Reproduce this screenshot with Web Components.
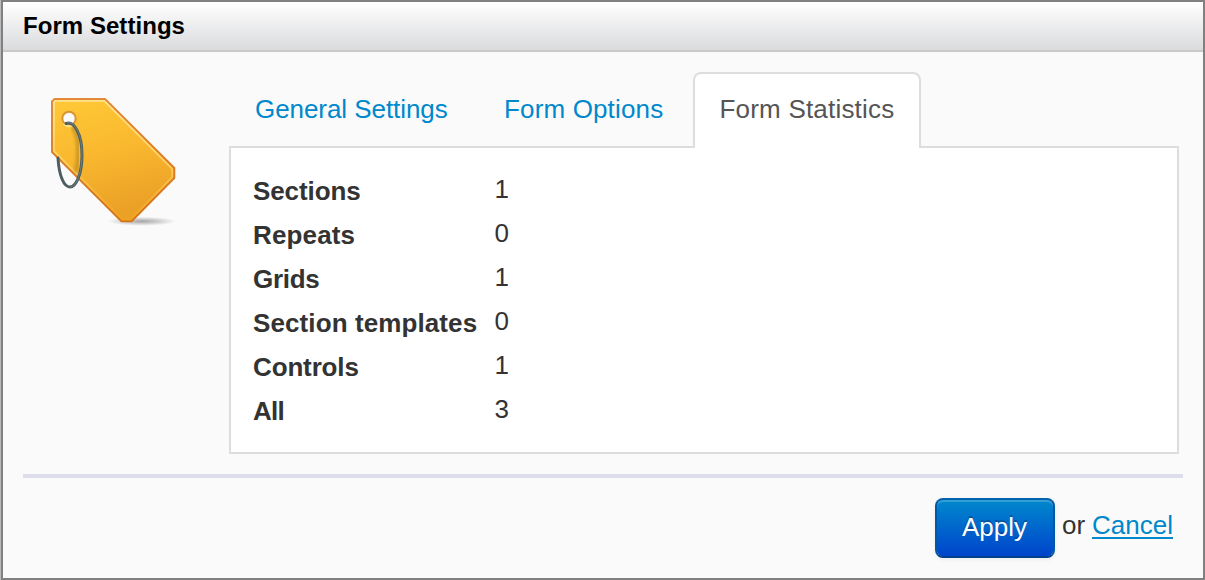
<!DOCTYPE html>
<html lang="en">
<head>
<meta charset="utf-8">
<title>Form Settings</title>
<style>
html,body{margin:0;height:100%;overflow:hidden}
body{font-family:"Liberation Sans",Arial,sans-serif;font-size:26px;line-height:40px;color:#333;background:#bbb}
</style>
</head>
<body>
<settings-dialog heading="Form Settings">
  <tag-icon slot="icon"></tag-icon>
  <tab-strip slot="content">
    <tab-item style="width:249px;letter-spacing:-.06px">General Settings</tab-item>
    <tab-item style="width:215px;letter-spacing:.15px">Form Options</tab-item>
    <tab-item active style="width:228px;letter-spacing:.2px">Form Statistics</tab-item>
  </tab-strip>
  <stats-panel slot="content">
    <stat-row label="Sections" style="--track:-.1px">1</stat-row>
    <stat-row label="Repeats" style="--track:.14px">0</stat-row>
    <stat-row label="Grids" style="--track:-.3px">1</stat-row>
    <stat-row label="Section templates" style="--track:.1px">0</stat-row>
    <stat-row label="Controls" style="--track:-.14px">1</stat-row>
    <stat-row label="All" style="--track:-.7px">3</stat-row>
  </stats-panel>
  <primary-button slot="actions">Apply</primary-button>
  <span slot="actions" style="margin-left:7px">or</span>
  <text-link slot="actions">Cancel</text-link>
</settings-dialog>
<script>
const define = (name, html, setup) => customElements.define(name, class extends HTMLElement {
  constructor() {
    super();
    this.attachShadow({mode: 'open'}).innerHTML = html;
  }
  connectedCallback() { if (setup) setup(this, this.shadowRoot); }
});

define('settings-dialog', `<style>
:host{display:flex;flex-direction:column;box-sizing:border-box;width:1204px;height:580px;margin-left:1px;border:2px solid #808080;background:#fafafa}
header{box-sizing:border-box;height:50px;padding-left:20px;border-bottom:2px solid #c9c9c9;background:linear-gradient(#fff,#dadbdd);font-weight:bold;font-size:24px;line-height:48px;letter-spacing:.05px;color:#000}
main{display:grid;grid-template-columns:206px 950px;height:402px;box-sizing:border-box;padding:20px 0 0 20px}
.icon{padding:13px 0 0 12px}
.content{display:flex;flex-direction:column}
hr{box-sizing:border-box;width:1160px;height:4px;margin:20px 0 0 20px;border:0;background:#ddddec;flex:none}
footer{display:flex;justify-content:flex-end;padding:20px 30px 0 0;line-height:54px}
</style>
<header></header>
<main><div class="icon"><slot name="icon"></slot></div><div class="content"><slot name="content"></slot></div></main>
<hr><footer><slot name="actions"></slot></footer>`,
(el, root) => root.querySelector('header').textContent = el.getAttribute('heading'));

define('tab-strip', `<style>
:host{display:flex;height:76px;margin-bottom:-2px;position:relative;z-index:1}
</style><slot></slot>`);

define('tab-item', `<style>
:host{display:block;box-sizing:border-box;height:76px;padding:15px 0 0 24px;border:2px solid transparent;border-bottom:0;border-radius:8px 8px 0 0;color:#08c;white-space:nowrap}
:host([active]){padding-left:24.5px;color:#555;background:#fff;border-color:#ddd}
</style><slot></slot>`);

define('stats-panel', `<style>
:host{display:block;box-sizing:border-box;width:950px;height:308px;padding:20px 0 0 22px;border:2px solid #ddd;background:#fff}
</style><slot></slot>`);

define('stat-row', `<style>
:host{display:grid;grid-template-columns:241.5px auto;height:44px;line-height:40px}
b{padding-top:3px;letter-spacing:var(--track,0)}
span{padding-top:1px}
</style><b></b><span><slot></slot></span>`,
(el, root) => root.querySelector('b').textContent = el.getAttribute('label'));

define('primary-button', `<style>
:host{display:block;box-sizing:border-box;width:120px;height:60px;padding-right:1px;border:2px solid;border-color:#0062ad #0058a6 #00408c;border-radius:8px;background:linear-gradient(#08c,#04c);background-clip:padding-box;background-color:#0050b0;box-shadow:inset 0 2px 0 rgba(255,255,255,.2),0 2px 4px rgba(0,0,0,.05);color:#fff;text-align:center;line-height:54px;text-shadow:0 -2px 0 rgba(0,0,0,.25)}
</style><slot></slot>`);

define('text-link', `<style>
:host{display:block;margin-left:7px;color:#08c;text-decoration:underline;text-decoration-thickness:2px;text-underline-offset:3px}
</style><slot></slot>`);

define('tag-icon', `<style>:host{display:block;width:150px;height:150px}svg{display:block}</style>
<svg width="150" height="150" viewBox="35 85 150 150">
<defs>
<linearGradient id="body" x1="0" y1="0" x2=".25" y2="1"><stop stop-color="#ffc936"/><stop offset=".5" stop-color="#f9b82f"/><stop offset="1" stop-color="#eba026"/></linearGradient>
<linearGradient id="edge" x1="0" y1="0" x2="0" y2="1"><stop stop-color="#e38a38"/><stop offset="1" stop-color="#d67518"/></linearGradient>
<linearGradient id="hi" x1="0" y1="0" x2="0" y2="1"><stop stop-color="#ffe79a"/><stop offset=".45" stop-color="#ffd569"/><stop offset="1" stop-color="#f0a322"/></linearGradient>
<radialGradient id="ground"><stop stop-color="#777" stop-opacity=".65"/><stop offset="1" stop-color="#777" stop-opacity="0"/></radialGradient>
<filter id="soft"><feGaussianBlur stdDeviation="1.4"/></filter>
</defs>
<ellipse cx="142" cy="221.3" rx="34" ry="4.5" fill="url(#ground)"/>
<path d="M54.5 99H105L174.3 168V178L131.5 221.3H121.5L52 152V101.5Z" fill="url(#body)" stroke="url(#edge)" stroke-width="2" stroke-linejoin="round"/>
<path d="M55 101H104.4L172.2 168.8V177.2L130.7 219.3H122.3L54 151.2V102Z" fill="none" stroke="url(#hi)" stroke-width="1.7"/>
<path d="M72 127C80 136 79 158 76 172" fill="none" stroke="#9a741f" stroke-width="4" opacity=".5" filter="url(#soft)"/>
<circle cx="69" cy="118.5" r="6.7" fill="#fafafa" stroke="#d99332" stroke-width="2"/>
<path d="M63.5 123.5A7 7 0 0 0 73 125" fill="none" stroke="#ffe18a" stroke-width="2"/>
<path d="M66 123.5C74 120.5 82 134 82 155C82 174 76 187 70 187C64 187 59 176 58 158" fill="none" stroke="#4e5d5e" stroke-width="3" stroke-linecap="round"/>
<path d="M67 122.7C75 121 82.5 136 82 156C81.5 174 76 187 70 187" fill="none" stroke="#8e9b92" stroke-width=".7" opacity=".75"/>
</svg>`);
</script>
</body>
</html>
